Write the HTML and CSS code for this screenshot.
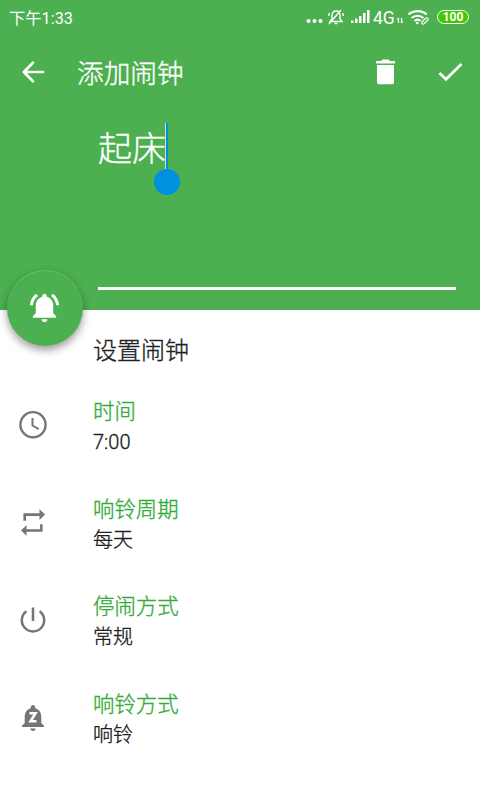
FILE: index.html
```html
<!DOCTYPE html>
<html lang="zh-CN">
<head>
<meta charset="utf-8">
<title>添加闹钟</title>
<link rel="stylesheet" href="styles.css">
</head>
<body>
<header class="header">
  <div class="status">
    <span class="clock">下午1:33</span>
    <svg class="indicators" width="107" height="36" viewBox="0 0 107 36" fill="none" stroke="#fff">
      <g fill="#fff" stroke="none"><circle cx="8.500" cy="21" r="2"/><circle cx="14.500" cy="21" r="2"/><circle cx="20.500" cy="21" r="2"/>
      <path d="M51 23v-2.500h2.500V23zM55 23v-4.500h2.500V23zM59 23v-7h2.500V23zM63 23V13h2.500v10zM67 23V10h2.500v13z"/></g>
      <path stroke-width="1.400" d="M30 21.500l2-2.500v-3.500c0-3 1.500-4.500 4-4.500s4 1.500 4 4.500V19l2 2.500zM34.500 23.500h3M29 24L41 10M29.500 13l-1 3M42.500 13l1 3"/>
      <text class="network" x="73" y="23.500">4G</text>
      <path stroke-width="1.200" d="M98.500 23v-4.500l-1.500 1M101.500 18v4.500l1.500-1"/>
    </svg>
    <svg class="wifi" width="26" height="36" viewBox="0 0 26 36" fill="none" stroke="#fff">
      <path stroke-width="2.200" d="M1.500 14.500c5.200-4.500 13.200-4.500 18.200 0M4.500 18c3.500-3 8.600-3 12 0M7.500 21c1.900-1.600 4.400-1.600 6 0"/>
      <circle cx="10.300" cy="23" r="1.300" fill="#fff" stroke="none"/>
      <path stroke-width="1.200" d="M15.500 21.500l3.200-3.200c1.400-1.200 3.300.6 2 2l-3.500 3.300c-1.600 1.300-3.400-.6-2-2z"/>
    </svg>
    <span class="battery">100</span>
  </div>
  <div class="toolbar">
    <svg class="back" width="24" height="24" viewBox="0 0 24 24" fill="none" stroke="#fff" stroke-width="2.700" stroke-linecap="round"><path stroke-linejoin="round" d="M12 2.800L2.800 12l9.200 9.200M3 12h19"/></svg>
    <h1 class="title">添加闹钟</h1>
    <svg class="trash" width="22" height="26" viewBox="0 0 22 26" fill="#fff"><path d="M1 2h5l1.500-1.500h6L15 2h5v2.500H1zM2 6h17v17c0 1.400-.9 2.300-2.300 2.300H4.300C2.900 25.300 2 24.400 2 23z"/></svg>
    <svg class="check" width="26" height="24" viewBox="0 0 26 24" fill="none" stroke="#fff" stroke-width="2.800"><path d="M1.500 13l6.500 6.300L23.500 4"/></svg>
  </div>
  <div class="name-field">
    <span class="name">起床</span><span class="caret"></span>
  </div>
  <div class="fab">
    <svg width="35" height="35" viewBox="0 0 24 24" fill="#fff"><path d="M7.580 4.080L6.150 2.650C3.750 4.480 2.170 7.300 2.030 10.500h2c.15-2.650 1.510-4.970 3.550-6.420zm12.390 6.420h2c-.15-3.200-1.730-6.020-4.120-7.850l-1.420 1.430c2.020 1.450 3.390 3.770 3.540 6.420zM18 11c0-3.070-1.640-5.640-4.500-6.320V4c0-.83-.67-1.500-1.500-1.500s-1.500.67-1.500 1.500v.68C7.630 5.360 6 7.920 6 11v5l-2 2v1h16v-1l-2-2zM10 20h4c0 1.100-.9 2-2 2s-2-.9-2-2z"/></svg>
  </div>
</header>
<main class="settings">
  <h2 class="heading">设置闹钟</h2>
  <section class="row">
    <svg class="icon" width="32" height="32" viewBox="0 0 32 32" fill="none" stroke="#757575" stroke-width="2.400"><circle cx="16" cy="15.700" r="12.600"/><path stroke-width="2" d="M15.500 9v7.500l6.200 3.700"/></svg>
    <div class="text"><div class="label">时间</div><div class="value">7:00</div></div>
  </section>
  <section class="row">
    <svg class="icon" width="32" height="32" viewBox="0 0 32 32" fill="none" stroke="#757575" stroke-width="2.600"><path d="M7.700 13.800V7.600H23M24.300 17.300v6.200H9"/><path fill="#757575" stroke="none" d="M22.500 2.300l5.500 5.300-5.500 5.300zM9.500 18.200L4 23.500l5.500 5.300z"/></svg>
    <div class="text"><div class="label">响铃周期</div><div class="value">每天</div></div>
  </section>
  <section class="row">
    <svg class="icon" width="32" height="32" viewBox="0 0 32 32" fill="none" stroke="#757575" stroke-width="2.500"><path d="M16 3.400v13.500M9.400 7.200A11.200 11.200 0 1 0 22.600 7.200"/></svg>
    <div class="text"><div class="label">停闹方式</div><div class="value">常规</div></div>
  </section>
  <section class="row">
    <svg class="icon" width="32" height="32" viewBox="0 .5 32 32" fill="#757575"><path d="M24.300 15.500c0-4.500-2.200-7.800-6.100-8.800v-1c0-1.200-1-2.200-2.200-2.200s-2.200 1-2.200 2.200v1c-3.900 1-6.100 4.300-6.100 8.800v6L5 24.300v1.300h22v-1.300l-2.700-2.800zM13.300 27h5.400c0 1.500-1.200 2.500-2.700 2.500s-2.700-1-2.700-2.500z"/><path fill="none" stroke="#fff" stroke-width="2.600" d="M12.500 11.800h6l-4.900 8h5.800"/></svg>
    <div class="text"><div class="label">响铃方式</div><div class="value">响铃</div></div>
  </section>
</main>
</body>
</html>
```
FILE: styles.css
```css
* {
  box-sizing: border-box;
}

body {
  margin: 0;
  height: 800px;
  overflow: hidden;
  background: #fff;
  color: #212121;
  font-family: Roboto, "Noto Sans CJK SC", sans-serif;
  font-weight: 300;
  -webkit-text-stroke: .35px currentColor;
}

h1, h2 {
  margin: 0;
  font-weight: 300;
}

svg {
  display: block;
  flex: none;
}

.header {
  position: relative;
  height: 310px;
  background: #4caf50;
  color: #fff;
}

.status {
  display: flex;
  align-items: center;
  height: 36px;
  padding: 0 11px 0 9px;
  -webkit-text-stroke: 0;
}

.clock {
  margin-right: auto;
  padding-top: 1px;
  font-size: 16.300px;
  font-weight: 400;
  line-height: 35px;
}

.network {
  fill: #fff;
  stroke: none;
  font-size: 17.500px;
  font-weight: 400;
}

.battery {
  width: 32px;
  height: 14px;
  margin: -2px 0 0 4px;
  border: 1.500px solid #fff;
  border-radius: 8px;
  background: #46c800;
  font-size: 12px;
  font-weight: 700;
  line-height: 12px;
  text-align: center;
}

.toolbar {
  display: flex;
  align-items: center;
  height: 72px;
  padding: 0 16px 0 21px;
}

.title {
  margin: 0 auto 0 32px;
  padding-top: 4px;
  font-size: 26.700px;
  line-height: 40px;
}

.check {
  margin-left: 41px;
}

.name-field {
  display: flex;
  align-items: flex-start;
  height: 182px;
  margin: 0 24px 0 98px;
  padding-top: 15px;
  border-bottom: 3px solid #fff;
}

.name {
  padding-top: 1px;
  font-size: 34px;
  line-height: 50px;
}

.caret {
  position: relative;
  width: 2px;
  height: 48px;
  background: #0090e0;
  box-shadow: -1px 0 #c8eac8;
}

.caret::after {
  position: absolute;
  top: 46px;
  left: -12px;
  width: 26px;
  height: 26px;
  border-radius: 50%;
  background: #0090e0;
  content: "";
}

.fab {
  position: absolute;
  top: 270px;
  left: 7px;
  display: flex;
  align-items: center;
  justify-content: center;
  width: 76px;
  height: 76px;
  padding: 0 1px 2px 0;
  border-radius: 50%;
  background: #4caf50;
  box-shadow: 0 4px 9px rgba(0, 0, 0, .4), inset 0 1px #5cc660;
}

.heading {
  height: 66px;
  padding: 21px 0 0 93px;
  font-size: 24px;
  line-height: 40px;
}

.row {
  display: flex;
  align-items: center;
  gap: 44px;
  height: 97.800px;
  padding-left: 17px;
}

.text {
  padding-top: 3px;
}

.label {
  color: #32ab37;
  font-size: 21.400px;
  line-height: 32px;
}

.value {
  font-size: 20px;
  line-height: 29px;
}
```
